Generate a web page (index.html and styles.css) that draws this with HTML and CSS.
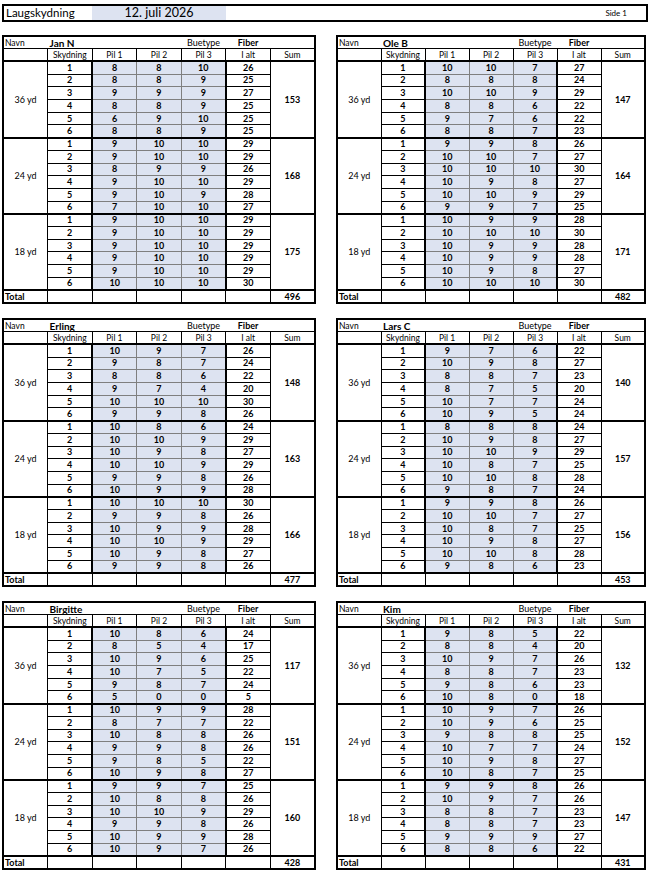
FILE: index.html
```html
<!DOCTYPE html>
<html lang="no">
<head>
<meta charset="utf-8">
<title>Laugskydning</title>
<link rel="stylesheet" href="styles.css">
</head>
<body>
<div class="page">
  <div class="topbar">
    <div class="title">Laugskydning</div>
    <div class="date">12. juli 2026</div>
    <div class="side">Side 1</div>
  </div>
  <div class="grid">

    <table class="card">
      <tr class="navn"><td class="lbl">Navn</td><td class="name">Jan N</td><td></td><td></td><td>Buetype</td><td class="b">Fiber</td><td></td></tr>
      <tr class="head"><td></td><td>Skydning</td><td>Pil 1</td><td>Pil 2</td><td>Pil 3</td><td>I alt</td><td>Sum</td></tr>
      <tr class="g"><td class="dist" rowspan="6">36 yd</td><td class="n">1</td><td class="p">8</td><td class="p">8</td><td class="p">10</td><td class="t">26</td><td class="sum" rowspan="6">153</td></tr>
      <tr><td class="n">2</td><td class="p">8</td><td class="p">8</td><td class="p">9</td><td class="t">25</td></tr>
      <tr><td class="n">3</td><td class="p">9</td><td class="p">9</td><td class="p">9</td><td class="t">27</td></tr>
      <tr><td class="n">4</td><td class="p">8</td><td class="p">8</td><td class="p">9</td><td class="t">25</td></tr>
      <tr><td class="n">5</td><td class="p">6</td><td class="p">9</td><td class="p">10</td><td class="t">25</td></tr>
      <tr><td class="n">6</td><td class="p">8</td><td class="p">8</td><td class="p">9</td><td class="t">25</td></tr>
      <tr class="g"><td class="dist" rowspan="6">24 yd</td><td class="n">1</td><td class="p">9</td><td class="p">10</td><td class="p">10</td><td class="t">29</td><td class="sum" rowspan="6">168</td></tr>
      <tr><td class="n">2</td><td class="p">9</td><td class="p">10</td><td class="p">10</td><td class="t">29</td></tr>
      <tr><td class="n">3</td><td class="p">8</td><td class="p">9</td><td class="p">9</td><td class="t">26</td></tr>
      <tr><td class="n">4</td><td class="p">9</td><td class="p">10</td><td class="p">10</td><td class="t">29</td></tr>
      <tr><td class="n">5</td><td class="p">9</td><td class="p">10</td><td class="p">9</td><td class="t">28</td></tr>
      <tr><td class="n">6</td><td class="p">7</td><td class="p">10</td><td class="p">10</td><td class="t">27</td></tr>
      <tr class="g"><td class="dist" rowspan="6">18 yd</td><td class="n">1</td><td class="p">9</td><td class="p">10</td><td class="p">10</td><td class="t">29</td><td class="sum" rowspan="6">175</td></tr>
      <tr><td class="n">2</td><td class="p">9</td><td class="p">10</td><td class="p">10</td><td class="t">29</td></tr>
      <tr><td class="n">3</td><td class="p">9</td><td class="p">10</td><td class="p">10</td><td class="t">29</td></tr>
      <tr><td class="n">4</td><td class="p">9</td><td class="p">10</td><td class="p">10</td><td class="t">29</td></tr>
      <tr><td class="n">5</td><td class="p">9</td><td class="p">10</td><td class="p">10</td><td class="t">29</td></tr>
      <tr><td class="n">6</td><td class="p">10</td><td class="p">10</td><td class="p">10</td><td class="t">30</td></tr>
      <tr class="tot"><td class="tl">Total</td><td></td><td></td><td></td><td></td><td></td><td class="tv">496</td></tr>
    </table>

    <table class="card">
      <tr class="navn"><td class="lbl">Navn</td><td class="name">Ole B</td><td></td><td></td><td>Buetype</td><td class="b">Fiber</td><td></td></tr>
      <tr class="head"><td></td><td>Skydning</td><td>Pil 1</td><td>Pil 2</td><td>Pil 3</td><td>I alt</td><td>Sum</td></tr>
      <tr class="g"><td class="dist" rowspan="6">36 yd</td><td class="n">1</td><td class="p">10</td><td class="p">10</td><td class="p">7</td><td class="t">27</td><td class="sum" rowspan="6">147</td></tr>
      <tr><td class="n">2</td><td class="p">8</td><td class="p">8</td><td class="p">8</td><td class="t">24</td></tr>
      <tr><td class="n">3</td><td class="p">10</td><td class="p">10</td><td class="p">9</td><td class="t">29</td></tr>
      <tr><td class="n">4</td><td class="p">8</td><td class="p">8</td><td class="p">6</td><td class="t">22</td></tr>
      <tr><td class="n">5</td><td class="p">9</td><td class="p">7</td><td class="p">6</td><td class="t">22</td></tr>
      <tr><td class="n">6</td><td class="p">8</td><td class="p">8</td><td class="p">7</td><td class="t">23</td></tr>
      <tr class="g"><td class="dist" rowspan="6">24 yd</td><td class="n">1</td><td class="p">9</td><td class="p">9</td><td class="p">8</td><td class="t">26</td><td class="sum" rowspan="6">164</td></tr>
      <tr><td class="n">2</td><td class="p">10</td><td class="p">10</td><td class="p">7</td><td class="t">27</td></tr>
      <tr><td class="n">3</td><td class="p">10</td><td class="p">10</td><td class="p">10</td><td class="t">30</td></tr>
      <tr><td class="n">4</td><td class="p">10</td><td class="p">9</td><td class="p">8</td><td class="t">27</td></tr>
      <tr><td class="n">5</td><td class="p">10</td><td class="p">10</td><td class="p">9</td><td class="t">29</td></tr>
      <tr><td class="n">6</td><td class="p">9</td><td class="p">9</td><td class="p">7</td><td class="t">25</td></tr>
      <tr class="g"><td class="dist" rowspan="6">18 yd</td><td class="n">1</td><td class="p">10</td><td class="p">9</td><td class="p">9</td><td class="t">28</td><td class="sum" rowspan="6">171</td></tr>
      <tr><td class="n">2</td><td class="p">10</td><td class="p">10</td><td class="p">10</td><td class="t">30</td></tr>
      <tr><td class="n">3</td><td class="p">10</td><td class="p">9</td><td class="p">9</td><td class="t">28</td></tr>
      <tr><td class="n">4</td><td class="p">10</td><td class="p">9</td><td class="p">9</td><td class="t">28</td></tr>
      <tr><td class="n">5</td><td class="p">10</td><td class="p">9</td><td class="p">8</td><td class="t">27</td></tr>
      <tr><td class="n">6</td><td class="p">10</td><td class="p">10</td><td class="p">10</td><td class="t">30</td></tr>
      <tr class="tot"><td class="tl">Total</td><td></td><td></td><td></td><td></td><td></td><td class="tv">482</td></tr>
    </table>

    <table class="card">
      <tr class="navn"><td class="lbl">Navn</td><td class="name">Erling</td><td></td><td></td><td>Buetype</td><td class="b">Fiber</td><td></td></tr>
      <tr class="head"><td></td><td>Skydning</td><td>Pil 1</td><td>Pil 2</td><td>Pil 3</td><td>I alt</td><td>Sum</td></tr>
      <tr class="g"><td class="dist" rowspan="6">36 yd</td><td class="n">1</td><td class="p">10</td><td class="p">9</td><td class="p">7</td><td class="t">26</td><td class="sum" rowspan="6">148</td></tr>
      <tr><td class="n">2</td><td class="p">9</td><td class="p">8</td><td class="p">7</td><td class="t">24</td></tr>
      <tr><td class="n">3</td><td class="p">8</td><td class="p">8</td><td class="p">6</td><td class="t">22</td></tr>
      <tr><td class="n">4</td><td class="p">9</td><td class="p">7</td><td class="p">4</td><td class="t">20</td></tr>
      <tr><td class="n">5</td><td class="p">10</td><td class="p">10</td><td class="p">10</td><td class="t">30</td></tr>
      <tr><td class="n">6</td><td class="p">9</td><td class="p">9</td><td class="p">8</td><td class="t">26</td></tr>
      <tr class="g"><td class="dist" rowspan="6">24 yd</td><td class="n">1</td><td class="p">10</td><td class="p">8</td><td class="p">6</td><td class="t">24</td><td class="sum" rowspan="6">163</td></tr>
      <tr><td class="n">2</td><td class="p">10</td><td class="p">10</td><td class="p">9</td><td class="t">29</td></tr>
      <tr><td class="n">3</td><td class="p">10</td><td class="p">9</td><td class="p">8</td><td class="t">27</td></tr>
      <tr><td class="n">4</td><td class="p">10</td><td class="p">10</td><td class="p">9</td><td class="t">29</td></tr>
      <tr><td class="n">5</td><td class="p">9</td><td class="p">9</td><td class="p">8</td><td class="t">26</td></tr>
      <tr><td class="n">6</td><td class="p">10</td><td class="p">9</td><td class="p">9</td><td class="t">28</td></tr>
      <tr class="g"><td class="dist" rowspan="6">18 yd</td><td class="n">1</td><td class="p">10</td><td class="p">10</td><td class="p">10</td><td class="t">30</td><td class="sum" rowspan="6">166</td></tr>
      <tr><td class="n">2</td><td class="p">9</td><td class="p">9</td><td class="p">8</td><td class="t">26</td></tr>
      <tr><td class="n">3</td><td class="p">10</td><td class="p">9</td><td class="p">9</td><td class="t">28</td></tr>
      <tr><td class="n">4</td><td class="p">10</td><td class="p">10</td><td class="p">9</td><td class="t">29</td></tr>
      <tr><td class="n">5</td><td class="p">10</td><td class="p">9</td><td class="p">8</td><td class="t">27</td></tr>
      <tr><td class="n">6</td><td class="p">9</td><td class="p">9</td><td class="p">8</td><td class="t">26</td></tr>
      <tr class="tot"><td class="tl">Total</td><td></td><td></td><td></td><td></td><td></td><td class="tv">477</td></tr>
    </table>

    <table class="card">
      <tr class="navn"><td class="lbl">Navn</td><td class="name">Lars C</td><td></td><td></td><td>Buetype</td><td class="b">Fiber</td><td></td></tr>
      <tr class="head"><td></td><td>Skydning</td><td>Pil 1</td><td>Pil 2</td><td>Pil 3</td><td>I alt</td><td>Sum</td></tr>
      <tr class="g"><td class="dist" rowspan="6">36 yd</td><td class="n">1</td><td class="p">9</td><td class="p">7</td><td class="p">6</td><td class="t">22</td><td class="sum" rowspan="6">140</td></tr>
      <tr><td class="n">2</td><td class="p">10</td><td class="p">9</td><td class="p">8</td><td class="t">27</td></tr>
      <tr><td class="n">3</td><td class="p">8</td><td class="p">8</td><td class="p">7</td><td class="t">23</td></tr>
      <tr><td class="n">4</td><td class="p">8</td><td class="p">7</td><td class="p">5</td><td class="t">20</td></tr>
      <tr><td class="n">5</td><td class="p">10</td><td class="p">7</td><td class="p">7</td><td class="t">24</td></tr>
      <tr><td class="n">6</td><td class="p">10</td><td class="p">9</td><td class="p">5</td><td class="t">24</td></tr>
      <tr class="g"><td class="dist" rowspan="6">24 yd</td><td class="n">1</td><td class="p">8</td><td class="p">8</td><td class="p">8</td><td class="t">24</td><td class="sum" rowspan="6">157</td></tr>
      <tr><td class="n">2</td><td class="p">10</td><td class="p">9</td><td class="p">8</td><td class="t">27</td></tr>
      <tr><td class="n">3</td><td class="p">10</td><td class="p">10</td><td class="p">9</td><td class="t">29</td></tr>
      <tr><td class="n">4</td><td class="p">10</td><td class="p">8</td><td class="p">7</td><td class="t">25</td></tr>
      <tr><td class="n">5</td><td class="p">10</td><td class="p">10</td><td class="p">8</td><td class="t">28</td></tr>
      <tr><td class="n">6</td><td class="p">9</td><td class="p">8</td><td class="p">7</td><td class="t">24</td></tr>
      <tr class="g"><td class="dist" rowspan="6">18 yd</td><td class="n">1</td><td class="p">9</td><td class="p">9</td><td class="p">8</td><td class="t">26</td><td class="sum" rowspan="6">156</td></tr>
      <tr><td class="n">2</td><td class="p">10</td><td class="p">10</td><td class="p">7</td><td class="t">27</td></tr>
      <tr><td class="n">3</td><td class="p">10</td><td class="p">8</td><td class="p">7</td><td class="t">25</td></tr>
      <tr><td class="n">4</td><td class="p">10</td><td class="p">9</td><td class="p">8</td><td class="t">27</td></tr>
      <tr><td class="n">5</td><td class="p">10</td><td class="p">10</td><td class="p">8</td><td class="t">28</td></tr>
      <tr><td class="n">6</td><td class="p">9</td><td class="p">8</td><td class="p">6</td><td class="t">23</td></tr>
      <tr class="tot"><td class="tl">Total</td><td></td><td></td><td></td><td></td><td></td><td class="tv">453</td></tr>
    </table>

    <table class="card">
      <tr class="navn"><td class="lbl">Navn</td><td class="name">Birgitte</td><td></td><td></td><td>Buetype</td><td class="b">Fiber</td><td></td></tr>
      <tr class="head"><td></td><td>Skydning</td><td>Pil 1</td><td>Pil 2</td><td>Pil 3</td><td>I alt</td><td>Sum</td></tr>
      <tr class="g"><td class="dist" rowspan="6">36 yd</td><td class="n">1</td><td class="p">10</td><td class="p">8</td><td class="p">6</td><td class="t">24</td><td class="sum" rowspan="6">117</td></tr>
      <tr><td class="n">2</td><td class="p">8</td><td class="p">5</td><td class="p">4</td><td class="t">17</td></tr>
      <tr><td class="n">3</td><td class="p">10</td><td class="p">9</td><td class="p">6</td><td class="t">25</td></tr>
      <tr><td class="n">4</td><td class="p">10</td><td class="p">7</td><td class="p">5</td><td class="t">22</td></tr>
      <tr><td class="n">5</td><td class="p">9</td><td class="p">8</td><td class="p">7</td><td class="t">24</td></tr>
      <tr><td class="n">6</td><td class="p">5</td><td class="p">0</td><td class="p">0</td><td class="t">5</td></tr>
      <tr class="g"><td class="dist" rowspan="6">24 yd</td><td class="n">1</td><td class="p">10</td><td class="p">9</td><td class="p">9</td><td class="t">28</td><td class="sum" rowspan="6">151</td></tr>
      <tr><td class="n">2</td><td class="p">8</td><td class="p">7</td><td class="p">7</td><td class="t">22</td></tr>
      <tr><td class="n">3</td><td class="p">10</td><td class="p">8</td><td class="p">8</td><td class="t">26</td></tr>
      <tr><td class="n">4</td><td class="p">9</td><td class="p">9</td><td class="p">8</td><td class="t">26</td></tr>
      <tr><td class="n">5</td><td class="p">9</td><td class="p">8</td><td class="p">5</td><td class="t">22</td></tr>
      <tr><td class="n">6</td><td class="p">10</td><td class="p">9</td><td class="p">8</td><td class="t">27</td></tr>
      <tr class="g"><td class="dist" rowspan="6">18 yd</td><td class="n">1</td><td class="p">9</td><td class="p">9</td><td class="p">7</td><td class="t">25</td><td class="sum" rowspan="6">160</td></tr>
      <tr><td class="n">2</td><td class="p">10</td><td class="p">8</td><td class="p">8</td><td class="t">26</td></tr>
      <tr><td class="n">3</td><td class="p">10</td><td class="p">10</td><td class="p">9</td><td class="t">29</td></tr>
      <tr><td class="n">4</td><td class="p">9</td><td class="p">9</td><td class="p">8</td><td class="t">26</td></tr>
      <tr><td class="n">5</td><td class="p">10</td><td class="p">9</td><td class="p">9</td><td class="t">28</td></tr>
      <tr><td class="n">6</td><td class="p">10</td><td class="p">9</td><td class="p">7</td><td class="t">26</td></tr>
      <tr class="tot"><td class="tl">Total</td><td></td><td></td><td></td><td></td><td></td><td class="tv">428</td></tr>
    </table>

    <table class="card">
      <tr class="navn"><td class="lbl">Navn</td><td class="name">Kim</td><td></td><td></td><td>Buetype</td><td class="b">Fiber</td><td></td></tr>
      <tr class="head"><td></td><td>Skydning</td><td>Pil 1</td><td>Pil 2</td><td>Pil 3</td><td>I alt</td><td>Sum</td></tr>
      <tr class="g"><td class="dist" rowspan="6">36 yd</td><td class="n">1</td><td class="p">9</td><td class="p">8</td><td class="p">5</td><td class="t">22</td><td class="sum" rowspan="6">132</td></tr>
      <tr><td class="n">2</td><td class="p">8</td><td class="p">8</td><td class="p">4</td><td class="t">20</td></tr>
      <tr><td class="n">3</td><td class="p">10</td><td class="p">9</td><td class="p">7</td><td class="t">26</td></tr>
      <tr><td class="n">4</td><td class="p">8</td><td class="p">8</td><td class="p">7</td><td class="t">23</td></tr>
      <tr><td class="n">5</td><td class="p">9</td><td class="p">8</td><td class="p">6</td><td class="t">23</td></tr>
      <tr><td class="n">6</td><td class="p">10</td><td class="p">8</td><td class="p">0</td><td class="t">18</td></tr>
      <tr class="g"><td class="dist" rowspan="6">24 yd</td><td class="n">1</td><td class="p">10</td><td class="p">9</td><td class="p">7</td><td class="t">26</td><td class="sum" rowspan="6">152</td></tr>
      <tr><td class="n">2</td><td class="p">10</td><td class="p">9</td><td class="p">6</td><td class="t">25</td></tr>
      <tr><td class="n">3</td><td class="p">9</td><td class="p">8</td><td class="p">8</td><td class="t">25</td></tr>
      <tr><td class="n">4</td><td class="p">10</td><td class="p">7</td><td class="p">7</td><td class="t">24</td></tr>
      <tr><td class="n">5</td><td class="p">10</td><td class="p">9</td><td class="p">8</td><td class="t">27</td></tr>
      <tr><td class="n">6</td><td class="p">10</td><td class="p">8</td><td class="p">7</td><td class="t">25</td></tr>
      <tr class="g"><td class="dist" rowspan="6">18 yd</td><td class="n">1</td><td class="p">9</td><td class="p">9</td><td class="p">8</td><td class="t">26</td><td class="sum" rowspan="6">147</td></tr>
      <tr><td class="n">2</td><td class="p">10</td><td class="p">9</td><td class="p">7</td><td class="t">26</td></tr>
      <tr><td class="n">3</td><td class="p">8</td><td class="p">8</td><td class="p">7</td><td class="t">23</td></tr>
      <tr><td class="n">4</td><td class="p">8</td><td class="p">8</td><td class="p">7</td><td class="t">23</td></tr>
      <tr><td class="n">5</td><td class="p">9</td><td class="p">9</td><td class="p">9</td><td class="t">27</td></tr>
      <tr><td class="n">6</td><td class="p">8</td><td class="p">8</td><td class="p">6</td><td class="t">22</td></tr>
      <tr class="tot"><td class="tl">Total</td><td></td><td></td><td></td><td></td><td></td><td class="tv">431</td></tr>
    </table>

  </div>
</div>
</body>
</html>
```

FILE: styles.css
```css
* { box-sizing: border-box; }

body {
  margin: 0;
  background: #fff;
  color: #000;
  font-family: Lato, "Liberation Sans", Arial, sans-serif;
}

.page {
  width: 650px;
  padding: 4px 2px 0 2px;
}

.topbar {
  display: flex;
  height: 18px;
  border: 2px solid #000;
}

.title {
  width: 88px;
  padding-left: 2px;
  font-size: 11.5px;
  line-height: 14px;
}

.date {
  width: 134px;
  background: #dde3f1;
  text-align: center;
  font-size: 12.5px;
  line-height: 14px;
}

.side {
  flex: 1;
  text-align: right;
  padding-right: 19px;
  font-size: 8px;
  line-height: 14px;
}

.grid {
  display: grid;
  grid-template-columns: 314px 310px;
  column-gap: 20px;
  row-gap: 14px;
  margin-top: 13px;
}

.card {
  width: 100%;
  height: 269px;
  border-collapse: collapse;
  table-layout: fixed;
  border: 2px solid #000;
  font-size: 9px;
}

.card td {
  height: 12px;
  padding: 0;
  text-align: center;
  line-height: 10px;
  white-space: nowrap;
  overflow: hidden;
}

.navn td {
  border-bottom: 1px solid #000;
}

.navn .lbl {
  text-align: left;
  padding-left: 1px;
  font-size: 8.5px;
}

.navn .name {
  text-align: left;
  padding-left: 2px;
  font-weight: 700;
  font-size: 10px;
}

.b { font-weight: 700; }

.head td {
  border: 1px solid #000;
  font-size: 8.5px;
}

.dist {
  border-right: 1px solid #000;
}

.n {
  font-weight: 700;
  border: 1px solid #000;
  border-right: 2px solid #000;
}

.p {
  font-weight: 700;
  background: #dde3f1;
  border: 1px solid #7f7f7f;
}

.t {
  font-weight: 700;
  border: 1px solid #000;
  border-left: 2px solid #000;
}

.sum {
  font-weight: 700;
  border-left: 1px solid #000;
}

.g td {
  border-top: 2px solid #000;
}

.tot td {
  border: 1px solid #000;
  border-top: 2px solid #000;
  font-weight: 700;
}

.tot .tl {
  text-align: left;
  padding-left: 1px;
}
```
